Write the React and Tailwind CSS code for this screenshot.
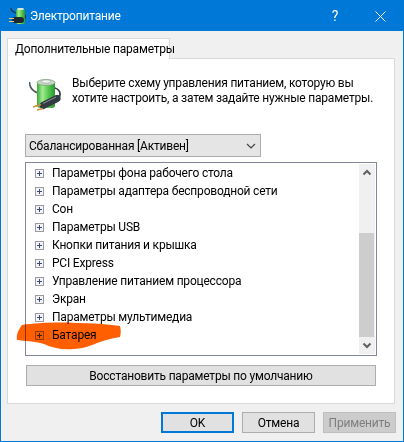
import React from "react";

const rows = [
  "Параметры фона рабочего стола",
  "Параметры адаптера беспроводной сети",
  "Сон",
  "Параметры USB",
  "Кнопки питания и крышка",
  "PCI Express",
  "Управление питанием процессора",
  "Экран",
  "Параметры мультимедиа",
  "Батарея",
];

const PlusBox = () => (
  <svg width="9" height="9" viewBox="0 0 9 9" className="shrink-0">
    <rect x="0.5" y="0.5" width="8" height="8" fill="#f4f4f6" stroke="#9a9aa2" />
    <path d="M2 4.500h5M4.500 2v5" stroke="#3a4a78" strokeWidth="1" />
  </svg>
);

const CellGradient = ({ id }) => (
  <defs>
    <linearGradient id={id} x1="0" x2="1" y1="0" y2="0">
      <stop offset="0" stopColor="#3aa83a" />
      <stop offset="0.3" stopColor="#a2ec90" />
      <stop offset="0.65" stopColor="#52c64f" />
      <stop offset="1" stopColor="#2c9432" />
    </linearGradient>
  </defs>
);

const BatteryIcon = () => (
  <svg width="34" height="34" viewBox="0 0 34 34">
    <CellGradient id="cellBig" />
    <path d="M0.500 3c0 4 1 8 8 11" fill="none" stroke="#4a5560" strokeWidth="1.500" />
    <path d="M26 9c3 1 5 3 5 6 0 3-1 5-3 6" fill="none" stroke="#39424c" strokeWidth="1.800" />
    <rect x="8" y="2" width="18" height="27" rx="3" fill="url(#cellBig)" />
    <ellipse cx="17" cy="3.500" rx="9" ry="3" fill="#c9d6c8" stroke="#6f9d6d" strokeWidth="0.700" />
    <ellipse cx="17" cy="2.500" rx="4.500" ry="1.800" fill="#eef2ee" stroke="#8b9a8b" strokeWidth="0.600" />
    <path d="M14 26.500l14-7" fill="none" stroke="#333940" strokeWidth="7" strokeLinecap="round" />
    <path d="M14 24.500l13-6.500" stroke="#8a929b" strokeWidth="1" />
    <path d="M4 28l8-2.500M8 31l6-1.500" stroke="#c4963f" strokeWidth="1.800" />
  </svg>
);

const TitleIcon = () => (
  <svg width="18" height="18" viewBox="0 0 18 18">
    <CellGradient id="cellSmall" />
    <path d="M3 1c0 3 2 4 5 5" fill="none" stroke="#26323c" strokeWidth="1.200" />
    <path d="M16 7c2 1 2 5-1 7" fill="none" stroke="#26323c" strokeWidth="1.200" />
    <rect x="8" y="2" width="9" height="15" rx="1.500" fill="url(#cellSmall)" />
    <rect x="9.500" y="1" width="6" height="2" fill="#dbe6da" />
    <path d="M7 13h6" stroke="#1f2730" strokeWidth="6" strokeLinecap="round" />
    <path d="M1 11.500h5M1 14.500h5" stroke="#e8c878" strokeWidth="1.200" />
  </svg>
);

const Button = ({ children, className }) => (
  <button className={`flex items-center justify-center bg-[#e1e1e1] ${className}`}>
    {children}
  </button>
);

export default function App() {
  return (
    <div className="relative w-[404px] h-[442px] flex flex-col bg-[#f0f0f0] border border-[#0078d7] text-[12px] leading-[16px] tracking-[-0.2px] text-black overflow-hidden font-['Roboto','Open_Sans',sans-serif]">
      {/* title bar */}
      <div className="h-[30px] shrink-0 flex items-center bg-[#0078d7] text-white">
        <div className="ml-[7px] mr-[4px] flex">
          <TitleIcon />
        </div>
        <span className="flex-1">Электропитание</span>
        <span className="w-[44px] mr-[18px] text-center text-[14px]">?</span>
        <svg width="11" height="11" viewBox="0 0 11 11" className="mr-[17px]">
          <path d="M0.500 0.500l10 10M10.500 0.500l-10 10" stroke="#fff" strokeWidth="1" />
        </svg>
      </div>

      {/* tabs */}
      <div className="flex-1 flex flex-col px-[6px] pt-[7px]">
        <div className="relative z-10 -mb-px w-[163px] h-[21px] bg-white border border-b-0 border-[#d9d9d9] flex items-center pl-[7px] whitespace-nowrap">
          Дополнительные параметры
        </div>
        <div className="w-[388px] h-[346px] bg-white border border-[#d9d9d9] px-[17px] flex flex-col">
          <div className="flex h-[75px] shrink-0 pt-[17px]">
            <div className="ml-[4px] w-[43px] shrink-0 mt-[3px]">
              <BatteryIcon />
            </div>
            <p className="leading-[15px] whitespace-nowrap">
              Выберите схему управления питанием, которую вы
              <br />
              хотите настроить, а затем задайте нужные параметры.
            </p>
          </div>

          <div className="w-[236px] h-[23px] shrink-0 bg-[#e5e5e5] border border-[#acacac] flex items-center justify-between pl-[3px] pr-[4px]">
            <span>Сбалансированная [Активен]</span>
            <svg width="10" height="6" viewBox="0 0 10 6">
              <path d="M1 1l4 4 4-4" fill="none" stroke="#444" strokeWidth="1.200" />
            </svg>
          </div>

          <div className="mt-[5px] h-[194px] shrink-0 bg-white border border-[#82879b] flex">
            <div className="flex-1 pl-[9px] pt-[1px]">
              {rows.map((row) => (
                <div key={row} className="h-[18px] flex items-center gap-[8px] whitespace-nowrap">
                  <PlusBox />
                  <span>{row}</span>
                </div>
              ))}
            </div>
            <div className="w-[16px] mr-[1px] my-[1px] bg-[#f0f0f0] flex flex-col items-center">
              <svg width="16" height="17" viewBox="0 0 16 17" className="shrink-0">
                <path d="M4.500 10.500l3.500-3.500 3.500 3.500" fill="none" stroke="#606060" strokeWidth="2" />
              </svg>
              <div className="flex-1 w-full pt-[52px]">
                <div className="h-[104px] w-[15px] bg-[#cdcdcd]" />
              </div>
              <svg width="16" height="17" viewBox="0 0 16 17" className="shrink-0">
                <path d="M4.500 6.500l3.500 3.500 3.500-3.500" fill="none" stroke="#606060" strokeWidth="2" />
              </svg>
            </div>
          </div>

          <Button className="mt-[9px] ml-px w-[350px] h-[21px] shrink-0 border border-[#adadad]">
            Восстановить параметры по умолчанию
          </Button>
        </div>

        {/* dialog buttons */}
        <div className="mt-[8px] flex justify-end gap-[8px] pr-[1px]">
          <Button className="w-[73px] h-[21px] border-2 border-[#0078d7]">OK</Button>
          <Button className="w-[73px] h-[21px] border border-[#adadad]">Отмена</Button>
          <button className="flex items-center justify-center w-[73px] h-[21px] bg-[#cccccc] text-[#7f7f7f] border border-[#bfbfbf]">
            Применить
          </button>
        </div>
      </div>

      {/* orange marker scribble over the last row */}
      <svg width="106" height="29" viewBox="0 0 106 29" className="absolute left-[15px] top-[321px] mix-blend-multiply">
        <path d="M6 3C20 1 40 0 60 1c16 0 30 1 44 3 1 4 1 7 0 11-8 1-14 3-20 5-8 3-14 6-26 7-12 1-22-1-30-5C18 19 8 19 1 18 0 12 3 7 6 3z" fill="#ff5f00" />
      </svg>
    </div>
  );
}
